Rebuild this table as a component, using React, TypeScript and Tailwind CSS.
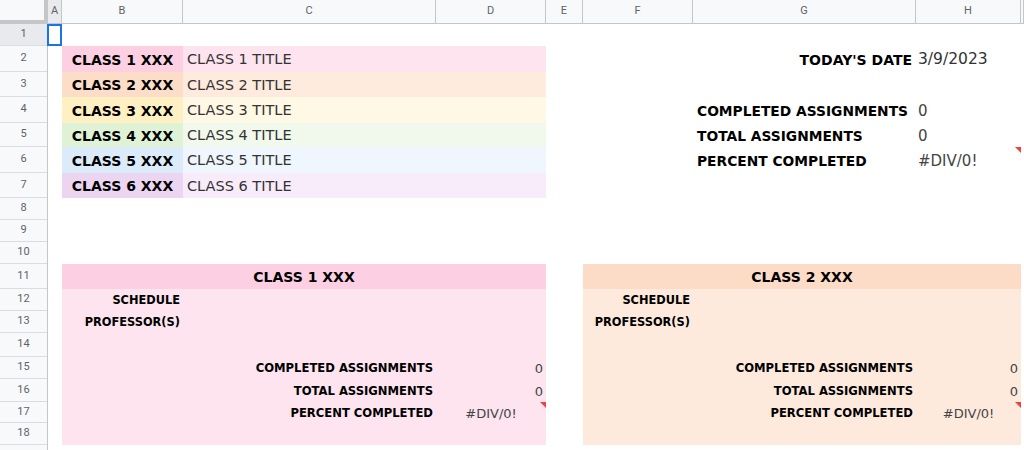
const columns = [
  { label: "A", w: "w-[14px]", active: true },
  { label: "B", w: "w-[121px]" },
  { label: "C", w: "w-[253px]" },
  { label: "D", w: "w-[110px]" },
  { label: "E", w: "w-[37px]" },
  { label: "F", w: "w-[110px]" },
  { label: "G", w: "w-[223px]" },
  { label: "H", w: "w-[105px]" },
  { label: "", w: "flex-1" },
];

// row 19 is only a sliver at the bottom edge, so no number
const rows = [
  { n: "1", h: "h-[22px]", active: true },
  { n: "2", h: "h-[26px]" },
  { n: "3", h: "h-[25px]" },
  { n: "4", h: "h-[26px]" },
  { n: "5", h: "h-[24px]" },
  { n: "6", h: "h-[26px]" },
  { n: "7", h: "h-[25px]" },
  { n: "8", h: "h-[22px]" },
  { n: "9", h: "h-[22px]" },
  { n: "10", h: "h-[22px]" },
  { n: "11", h: "h-[25px]" },
  { n: "12", h: "h-[22px]" },
  { n: "13", h: "h-[22px]" },
  { n: "14", h: "h-[24px]" },
  { n: "15", h: "h-[22px]" },
  { n: "16", h: "h-[23px]" },
  { n: "17", h: "h-[21px]" },
  { n: "18", h: "h-[22px]" },
  { n: "", h: "h-[22px]" },
];

const classes = [
  { code: "CLASS 1 XXX", title: "CLASS 1 TITLE", row: "row-start-2", dark: "bg-[#fcd0e2]", light: "bg-[#fde4ef]" },
  { code: "CLASS 2 XXX", title: "CLASS 2 TITLE", row: "row-start-3", dark: "bg-[#fcddc8]", light: "bg-[#feebde]" },
  { code: "CLASS 3 XXX", title: "CLASS 3 TITLE", row: "row-start-4", dark: "bg-[#fff0c4]", light: "bg-[#fff8e4]" },
  { code: "CLASS 4 XXX", title: "CLASS 4 TITLE", row: "row-start-5", dark: "bg-[#e0f2d5]", light: "bg-[#f1f8ec]" },
  { code: "CLASS 5 XXX", title: "CLASS 5 TITLE", row: "row-start-6", dark: "bg-[#dbebfa]", light: "bg-[#eff6fd]" },
  { code: "CLASS 6 XXX", title: "CLASS 6 TITLE", row: "row-start-7", dark: "bg-[#ecd5f0]", light: "bg-[#f9ecfa]" },
];

function ErrorMark() {
  return (
    <span className="absolute right-0 top-0 h-[6px] w-[6px] bg-[#e8453c] [clip-path:polygon(0_0,100%_0,100%_100%)]" />
  );
}

function ClassCard({
  code,
  cols,
  head,
  body,
  place,
}: {
  code: string;
  cols: string;
  head: string;
  body: string;
  place: string;
}) {
  return (
    <div
      className={`${place} ${body} ${cols} grid grid-rows-[25px_22px_22px_24px_22px_23px_21px_22px]`}
    >
      <div className={`col-span-3 ${head} flex items-center justify-center pt-[2px] text-[14px] font-bold text-black`}>
        {code}
      </div>
      <div className="col-start-1 row-start-2 flex items-center justify-end pr-[3px] pt-[2px] text-[11.4px] font-bold text-black">
        SCHEDULE
      </div>
      <div className="col-start-1 row-start-3 flex items-center justify-end pr-[3px] pt-[2px] text-[11.4px] font-bold text-black">
        PROFESSOR(S)
      </div>
      <div className="col-start-2 row-start-5 flex items-center justify-end pr-[3px] pt-[2px] text-[11.6px] font-bold text-black">
        COMPLETED ASSIGNMENTS
      </div>
      <div className="col-start-3 row-start-5 flex items-center justify-end pr-[3px] pt-[2px] text-[13px] text-[#444]">
        0
      </div>
      <div className="col-start-2 row-start-6 flex items-center justify-end pr-[3px] pt-[2px] text-[11.6px] font-bold text-black">
        TOTAL ASSIGNMENTS
      </div>
      <div className="col-start-3 row-start-6 flex items-center justify-end pr-[3px] pt-[2px] text-[13px] text-[#444]">
        0
      </div>
      <div className="col-start-2 row-start-7 flex items-center justify-end pr-[3px] pt-[2px] text-[11.6px] font-bold text-black">
        PERCENT COMPLETED
      </div>
      <div className="relative col-start-3 row-start-7 flex items-center justify-center pt-[2px] text-[13px] text-[#444]">
        #DIV/0!
        <ErrorMark />
      </div>
    </div>
  );
}

export default function App() {
  return (
    <div className="flex h-[450px] w-[1024px] flex-col overflow-hidden bg-white font-['DejaVu_Sans',sans-serif]">
      {/* column headers */}
      <div className="flex h-[24px] shrink-0 font-['Roboto',Arial,sans-serif] text-[11px] text-[#5f6368]">
        <div className="w-[48px] shrink-0 border-b-4 border-r-4 border-[#c4c7c5] bg-[#f8f9fa]" />
        {columns.map((c, i) => (
          <div
            key={i}
            className={`${c.w} flex shrink-0 items-center justify-center border-b border-r border-[#c4c7c5] ${
              c.active ? "bg-[#e8eaed]" : "bg-[#f8f9fa]"
            }`}
          >
            {c.label}
          </div>
        ))}
      </div>

      <div className="flex flex-1">
        {/* row headers */}
        <div className="flex w-[48px] shrink-0 flex-col border-r border-[#c4c7c5] font-['Roboto',Arial,sans-serif] text-[11px] text-[#5f6368]">
          {rows.map((r, i) => (
            <div
              key={i}
              className={`${r.h} flex shrink-0 items-center justify-center border-b border-[#dadce0] ${
                r.active ? "bg-[#e8eaed]" : "bg-[#f8f9fa]"
              }`}
            >
              {r.n}
            </div>
          ))}
        </div>

        {/* sheet */}
        <div className="grid flex-1 grid-cols-[14px_121px_253px_110px_37px_110px_223px_105px_1fr] grid-rows-[22px_26px_25px_26px_24px_26px_25px_22px_22px_22px_25px_22px_22px_24px_22px_23px_21px_22px_1fr]">
          <div className="col-start-1 row-start-1 -ml-px border-2 border-[#1a73e8]" />

          {classes.map((c) => (
            <div key={c.code} className="contents">
              <div className={`${c.row} col-start-2 ${c.dark} flex items-center justify-center pt-[2px] text-[14px] font-bold text-black`}>
                {c.code}
              </div>
              <div className={`${c.row} col-start-3 col-span-2 ${c.light} flex items-center pl-[4px] pt-[2px] text-[14.5px] text-[#333]`}>
                {c.title}
              </div>
            </div>
          ))}

          <div className="col-start-7 row-start-2 flex items-center justify-end pr-[4px] pt-[2px] text-[14px] font-bold text-black">
            TODAY'S DATE
          </div>
          <div className="col-start-8 row-start-2 flex items-center pl-[2px] pt-[2px] text-[15.5px] text-[#333]">
            3/9/2023
          </div>
          <div className="col-start-7 row-start-4 flex items-center pl-[4px] pt-[2px] text-[13.8px] font-bold text-black">
            COMPLETED ASSIGNMENTS
          </div>
          <div className="col-start-8 row-start-4 flex items-center pl-[2px] pt-[2px] text-[15px] text-[#444]">
            0
          </div>
          <div className="col-start-7 row-start-5 flex items-center pl-[4px] pt-[2px] text-[13.8px] font-bold text-black">
            TOTAL ASSIGNMENTS
          </div>
          <div className="col-start-8 row-start-5 flex items-center pl-[2px] pt-[2px] text-[15px] text-[#444]">
            0
          </div>
          <div className="col-start-7 row-start-6 flex items-center pl-[4px] pt-[2px] text-[13.8px] font-bold text-black">
            PERCENT COMPLETED
          </div>
          <div className="relative col-start-8 row-start-6 flex items-center pl-[2px] pt-[2px] text-[15px] text-[#444]">
            #DIV/0!
            <ErrorMark />
          </div>

          <ClassCard
            code="CLASS 1 XXX"
            place="col-start-2 col-span-3 row-start-11 row-span-8"
            cols="grid-cols-[121px_253px_110px]"
            head="bg-[#fcd0e2]"
            body="bg-[#fde4ef]"
          />
          <ClassCard
            code="CLASS 2 XXX"
            place="col-start-6 col-span-3 row-start-11 row-span-8"
            cols="grid-cols-[110px_223px_105px]"
            head="bg-[#fcdcc6]"
            body="bg-[#feeadc]"
          />
        </div>
      </div>
    </div>
  );
}
